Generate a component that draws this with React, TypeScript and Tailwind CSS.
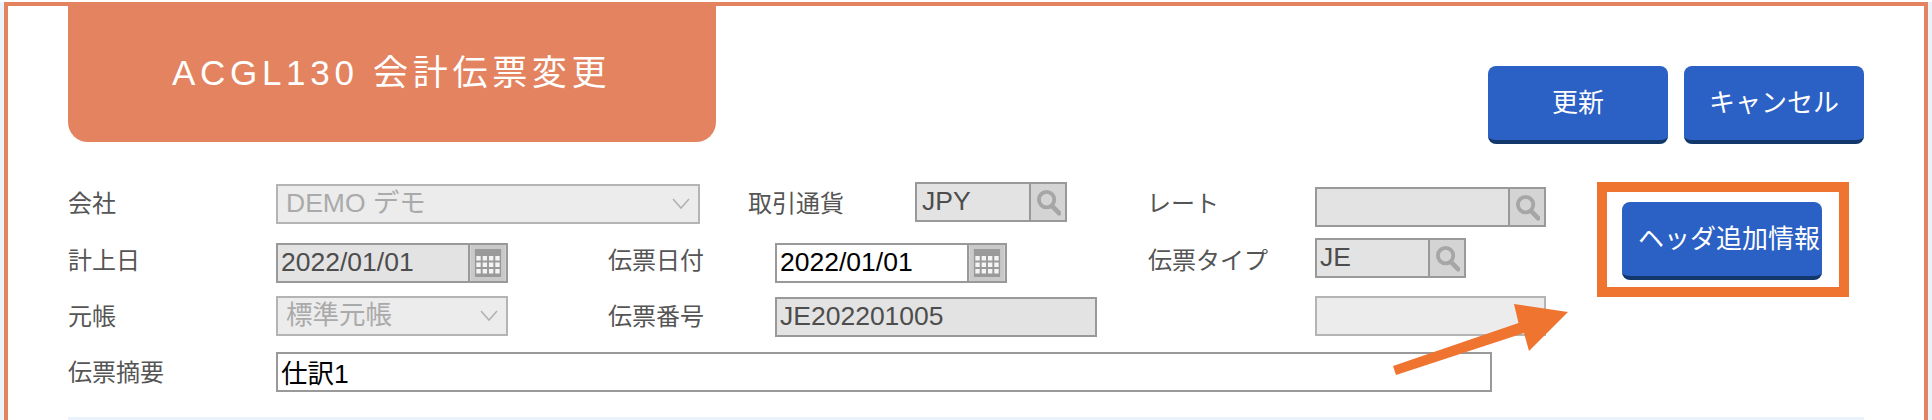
import React from "react";

const FONT = "font-['Liberation_Sans','Noto_Sans_CJK_JP',sans-serif]";

const Label: React.FC<{ text: string; className: string }> = ({ text, className }) => (
    <label className={`h-10 flex items-center shrink-0 text-[24px] text-[#555555] ${className}`}>{text}</label>
);

const CalendarIcon = () => (
    <svg width="34" height="36" viewBox="0 0 35 36" preserveAspectRatio="none" className="blur-[0.4px]">
        <rect x="0" y="0" width="35" height="36" fill="#c9c9c9" />
        <rect x="4" y="4" width="27" height="28" fill="#9a9a9a" />
        {[11, 17.5, 24].map(y =>
            [5.5, 12, 18.5, 25].map(x => (
                <rect key={`${x}-${y}`} x={x} y={y} width="4.5" height="4.5" fill="#f4f4f4" />
            ))
        )}
    </svg>
);

const SearchIcon = () => (
    <svg width="25" height="27" viewBox="0 0 26 28" fill="none" className="blur-[0.6px]">
        <circle cx="11" cy="11" r="8" stroke="#a6a6a6" strokeWidth="4" />
        <path d="M17 18 L24 25" stroke="#a6a6a6" strokeWidth="5" strokeLinecap="round" />
    </svg>
);

const Chevron = () => (
    <svg width="18" height="12" viewBox="0 0 18 12" fill="none">
        <path d="M1 1 L9 10 L17 1" stroke="#b0b0b0" strokeWidth="1.5" />
    </svg>
);

const Input: React.FC<{ value?: string; icon?: React.ReactNode; iconWidth?: string; className: string; light?: boolean; white?: boolean; pad?: string }> = ({
    value = "",
    icon,
    iconWidth = "w-[36px]",
    className,
    light,
    white,
    pad = "pl-[3px]",
}) => (
    <div
        className={`h-10 flex shrink-0 border-2 ${light ? "border-[#b4b4b4] bg-[#ececec]" : "border-[#999999]"} ${
            white ? "bg-white" : light ? "" : "bg-[#e3e3e3]"
        } ${className}`}
    >
        <input
            readOnly
            value={value}
            className={`flex-1 min-w-0 bg-transparent outline-none text-[26.5px] leading-none pb-[2px] ${pad} ${white ? "text-black" : "text-[#4d4d4d]"}`}
        />
        {icon && (
            <span className={`shrink-0 flex items-center justify-center border-l-2 border-[#999999] bg-[#d4d4d4] ${iconWidth}`}>
                {icon}
            </span>
        )}
    </div>
);

const DisabledSelect: React.FC<{ text: string; className: string }> = ({ text, className }) => (
    <div className={`h-10 shrink-0 flex items-center justify-between pl-2 pr-2 border-2 border-[#b4b4b4] bg-[#ececec] text-[26.5px] text-[#aaaaaa] ${className}`}>
        <span>{text}</span>
        <Chevron />
    </div>
);

const BlueButton: React.FC<{ text: string; className: string }> = ({ text, className }) => (
    <button
        type="button"
        className={`h-[78px] shrink-0 rounded-lg bg-[#2b60c4] border-b-4 border-[#12386b] text-white text-[26px] whitespace-nowrap ${className}`}
    >
        {text}
    </button>
);

const App: React.FC = () => {
    return (
        <div className={`relative w-[1932px] h-[420px] overflow-hidden bg-[#eaf3fb] ${FONT}`}>
            <div className="h-[2px] bg-white" />
            <div className="ml-1 w-[1924px] h-[418px] border-4 border-b-0 border-[#e48360] bg-white pl-[60px] pr-[60px]">
                {/* Header */}
                <div className="flex justify-between items-start">
                    <h1 className="w-[648px] h-[136px] pt-[45px] pl-[104px] bg-[#e48360] rounded-b-[20px] text-white text-[35px] leading-[44px] tracking-[4.7px] font-normal">
                        ACGL130 会計伝票変更
                    </h1>
                    <div className="flex gap-4 mt-[60px]">
                        <BlueButton text="更新" className="w-[180px]" />
                        <BlueButton text="キャンセル" className="w-[180px]" />
                    </div>
                </div>

                {/* Form */}
                <div className="flex items-start mt-[38px]">
                    <div className="w-[1478px] shrink-0 flex flex-col">
                        <div className="flex items-start h-14">
                            <Label text="会社" className="w-[208px] mt-0.5" />
                            <DisabledSelect text="DEMO デモ" className="w-[424px] mt-0.5" />
                            <Label text="取引通貨" className="w-[167px] ml-12 mt-0.5" />
                            <Input value="JPY" icon={<SearchIcon />} className="w-[152px]" pad="pl-[5px]" />
                            <Label text="レート" className="w-[168px] ml-[80px] mt-0.5" />
                            <Input icon={<SearchIcon />} className="w-[231px] mt-[5px]" />
                        </div>
                        <div className="flex items-start h-[58px]">
                            <Label text="計上日" className="w-[208px] mt-[3px]" />
                            <Input value="2022/01/01" icon={<CalendarIcon />} iconWidth="w-[38px]" className="w-[232px] mt-[5px]" />
                            <Label text="伝票日付" className="w-[167px] ml-[100px] mt-[3px]" />
                            <Input value="2022/01/01" icon={<CalendarIcon />} iconWidth="w-[38px]" white className="w-[232px] mt-[5px]" />
                            <Label text="伝票タイプ" className="w-[167px] ml-[141px] mt-[3px]" />
                            <Input value="JE" icon={<SearchIcon />} className="w-[151px]" />
                        </div>
                        <div className="flex items-start h-14">
                            <Label text="元帳" className="w-[208px] mt-px" />
                            <DisabledSelect text="標準元帳" className="w-[232px]" />
                            <Label text="伝票番号" className="w-[167px] ml-[100px] mt-px" />
                            <Input value="JE202201005" className="w-[322px] mt-px" />
                            <Input light className="w-[231px] ml-[218px]" />
                        </div>
                        <div className="flex items-start h-10">
                            <Label text="伝票摘要" className="w-[208px] mt-px" />
                            <Input value="仕訳1" white className="w-[1216px]" />
                        </div>
                    </div>
                    <div className="relative ml-[76px] mt-5">
                        <BlueButton text="ヘッダ追加情報" className="w-[200px] pl-[14px]" />
                        <div className="absolute -left-[25px] -right-[27px] -top-5 -bottom-[17px] border-[10px] border-[#ee742f] pointer-events-none" />
                    </div>
                </div>

                <div className="mt-[25px] h-[3px] bg-[#eaf3fb]" />
            </div>

            {/* Annotation arrow */}
            <svg className="absolute left-[1390px] top-[300px]" width="182" height="80" viewBox="0 0 182 80">
                <polygon points="3,66 128.5,23 124,4 178,12 139,51 134,33 6,75" fill="#ee742f" />
            </svg>
        </div>
    );
};

export default App;
